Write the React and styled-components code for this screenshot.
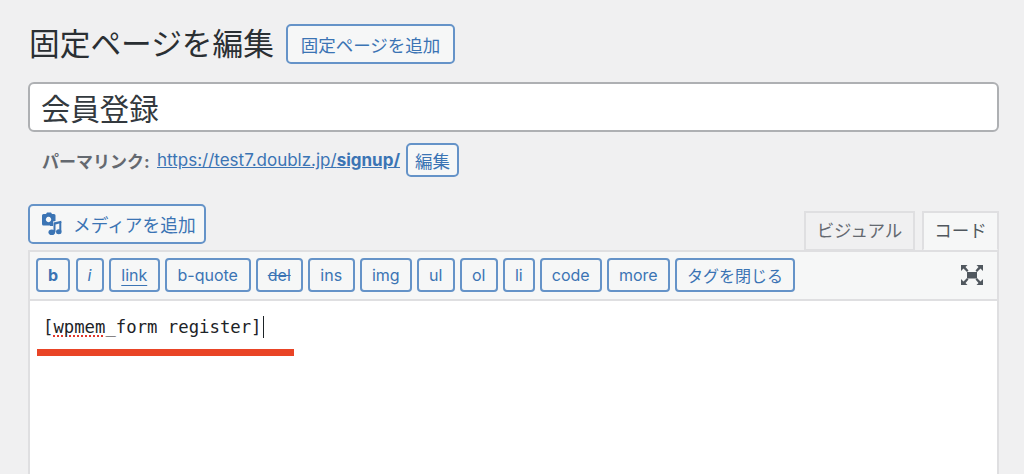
import React from "react";
import styled, { createGlobalStyle } from "styled-components";

const UI_FONT = `Inter, "Noto Sans CJK JP", sans-serif`;
const TOOL_BUTTONS = [
  { label: "b", width: 34, bold: true },
  { label: "i", width: 28, italic: true },
  { label: "link", width: 50.5, underline: true },
  { label: "b-quote", width: 85.5 },
  { label: "del", width: 46.5, strike: true },
  { label: "ins", width: 46.5 },
  { label: "img", width: 51.5 },
  { label: "ul", width: 37.5 },
  { label: "ol", width: 37.5 },
  { label: "li", width: 31.5 },
  { label: "code", width: 61.5 },
  { label: "more", width: 62.5 },
  { label: "タグを閉じる", width: 120 },
];

const GlobalStyle = createGlobalStyle`
  html, body {
    margin: 0;
    height: 474px;
    overflow: hidden;
    background: #f0f0f1;
  }
  * {
    box-sizing: border-box;
  }
`;

const MediaIcon = () => (
  <svg width="24" height="24" viewBox="0 0 24 24" fill="#3b74b4">
    <path fillRule="evenodd" d="M2.500 2H5l1-1.500h4L11 2h2a1.500 1.500 0 0 1 1.500 1.500V9l-2.500.6V14H9v-.500H2.500A1.500 1.500 0 0 1 1 12V3.500A1.500 1.500 0 0 1 2.500 2zM7.500 4.800a2.700 2.700 0 1 0 .01 0z" />
    <path d="M12.500 10.500l7.800-1.800v2.400l-5.800 1.300V20h-2z" />
    <path d="M18.300 10h2v9.500h-2z" />
    <ellipse cx="10.800" cy="20.200" rx="3.300" ry="2.800" />
    <ellipse cx="17.800" cy="19.700" rx="2.800" ry="2.500" />
  </svg>
);

const FullscreenIcon = () => (
  <svg width="24" height="22" viewBox="0 0 24 22" fill="#50575e">
    <rect x="7" y="8" width="10" height="6.500" />
    <path d="M1 1h6.500L5.500 3l3 3.500-1.500 1.500-3.500-3.500L1 7z" />
    <path d="M23 1h-6.500l2 2-3 3.500 1.500 1.500 3.500-3.500L23 7z" />
    <path d="M1 21h6.500l-2-2 3-3.500L7 14l-3.500 3.500L1 15z" />
    <path d="M23 21h-6.500l2-2-3-3.500 1.500-1.500 3.500 3.500L23 15z" />
  </svg>
);

const App = () => (
  <>
    <GlobalStyle />
    <Page>
      <HeadingRow>
        <Heading>固定ページを編集</Heading>
        <ActionButton $width={169} $height={40}>固定ページを追加</ActionButton>
      </HeadingRow>
      <TitleInput>会員登録</TitleInput>
      <PermalinkRow>
        <PermalinkLabel>パーマリンク:</PermalinkLabel>
        <PermalinkUrl>
          https://test7.doublz.jp/<strong>signup/</strong>
        </PermalinkUrl>
        <ActionButton $width={53} $height={34}>編集</ActionButton>
      </PermalinkRow>
      <EditorHead>
        <MediaButton $width={178} $height={40}>
          <MediaIcon />
          メディアを追加
        </MediaButton>
        <Tabs>
          <Tab>ビジュアル</Tab>
          <Tab $active>コード</Tab>
        </Tabs>
      </EditorHead>
      <Editor>
        <Toolbar>
          {TOOL_BUTTONS.map((button) => (
            <ToolButton
              key={button.label}
              $width={button.width}
              $bold={button.bold}
              $italic={button.italic}
              $underline={button.underline}
              $strike={button.strike}
            >
              {button.label}
            </ToolButton>
          ))}
          <FullscreenButton>
            <FullscreenIcon />
          </FullscreenButton>
        </Toolbar>
        <Content>
          <CodeLine>
            [<Misspelled>wpmem</Misspelled>_form register]<Caret />
          </CodeLine>
          <Highlight />
        </Content>
      </Editor>
    </Page>
  </>
);

const Page = styled.div`
  display: flex;
  flex-direction: column;
  width: 999px;
  height: 474px;
  margin-left: 28px;
  font-family: ${UI_FONT};
  overflow: hidden;
`;

const HeadingRow = styled.div`
  display: flex;
  align-items: center;
  gap: 12px;
  height: 40px;
  margin-top: 24px;
  width: 971px;
`;

const Heading = styled.h1`
  margin: 0 0 0 1px;
  width: 245px;
  font-size: 30.700px;
  line-height: 40px;
  font-weight: 400;
  color: #2a2f33;
  white-space: nowrap;
`;

const ActionButton = styled.button`
  display: inline-flex;
  align-items: center;
  justify-content: center;
  flex: none;
  width: ${({ $width }) => $width}px;
  height: ${({ $height }) => $height}px;
  padding: 0;
  border: 2px solid #6593c8;
  border-radius: 5px;
  background: #f6f7f7;
  color: #3b74b4;
  font-family: ${UI_FONT};
  font-size: 17.500px;
  white-space: nowrap;
`;

const TitleInput = styled.div`
  display: flex;
  align-items: center;
  width: 971px;
  height: 50px;
  margin-top: 18px;
  padding-left: 11px;
  border: 2px solid #aeb0b3;
  border-radius: 6px;
  background: #fff;
  color: #33393e;
  font-size: 29.400px;
`;

const PermalinkRow = styled.div`
  display: flex;
  align-items: center;
  height: 34px;
  margin-top: 11px;
  padding-left: 14px;
  font-size: 17px;
`;

const PermalinkLabel = styled.span`
  width: 115px;
  color: #646970;
  font-weight: 700;
  white-space: nowrap;
`;

const PermalinkUrl = styled.a`
  width: 249px;
  color: #3b74b4;
  text-decoration: underline;
  white-space: nowrap;
`;

const EditorHead = styled.div`
  display: flex;
  justify-content: space-between;
  align-items: flex-end;
  width: 971px;
  height: 46px;
  margin-top: 27px;
`;

const MediaButton = styled(ActionButton)`
  justify-content: flex-start;
  gap: 8px;
  padding-left: 11px;
  align-self: flex-start;
  font-size: 17.700px;
`;

const Tabs = styled.div`
  display: flex;
  gap: 7px;
  margin-bottom: -1px;
`;

const Tab = styled.div`
  display: flex;
  align-items: center;
  justify-content: center;
  width: ${({ $active }) => ($active ? 77 : 111)}px;
  height: 40px;
  padding-bottom: 3px;
  border: 2px solid #dfdfe1;
  border-bottom-color: ${({ $active }) => ($active ? "#f6f7f7" : "#dfdfe1")};
  background: ${({ $active }) => ($active ? "#f6f7f7" : "#f0f0f1")};
  color: ${({ $active }) => ($active ? "#50575e" : "#646970")};
  font-size: 17.500px;
`;

const Editor = styled.div`
  display: flex;
  flex-direction: column;
  flex: 1;
  width: 971px;
  border: 2px solid #dfdfe1;
  border-bottom: none;
`;

const Toolbar = styled.div`
  display: flex;
  align-items: flex-start;
  gap: 5.500px;
  height: 49px;
  padding: 6px 0 0 6px;
  background: #f6f7f7;
  border-bottom: 2px solid #dfdfe1;
`;

const ToolButton = styled.button`
  flex: none;
  width: ${({ $width }) => $width}px;
  height: 34px;
  padding: 0;
  border: 2px solid #6593c8;
  border-radius: 4px;
  background: #f6f7f7;
  color: #3b74b4;
  font-family: ${UI_FONT};
  font-size: 16px;
  font-weight: ${({ $bold }) => ($bold ? 700 : 400)};
  font-style: ${({ $italic }) => ($italic ? "italic" : "normal")};
  text-decoration: ${({ $underline, $strike }) =>
    $underline ? "underline" : $strike ? "line-through" : "none"};
  text-underline-offset: 4px;
  white-space: nowrap;
`;

const FullscreenButton = styled.div`
  display: flex;
  margin-left: auto;
  margin-right: 13px;
  margin-top: 6px;
`;

const Content = styled.div`
  position: relative;
  flex: 1;
  background: #fff;
  padding: 14px 0 0 14px;
`;

const CodeLine = styled.div`
  display: flex;
  align-items: center;
  height: 24px;
  margin-left: -1px;
  font-family: "DejaVu Sans Mono", "Liberation Mono", monospace;
  font-size: 17.300px;
  color: #1d2327;
  white-space: pre;
`;

const Misspelled = styled.span`
  text-decoration: underline dotted #e0352b 2px;
  text-underline-offset: 2px;
`;

const Caret = styled.span`
  width: 1px;
  height: 22px;
  margin-left: 1px;
  background: #1d2327;
`;

const Highlight = styled.div`
  position: absolute;
  left: 7px;
  top: 48px;
  width: 257px;
  height: 7px;
  background: #e94426;
`;

export default App;
